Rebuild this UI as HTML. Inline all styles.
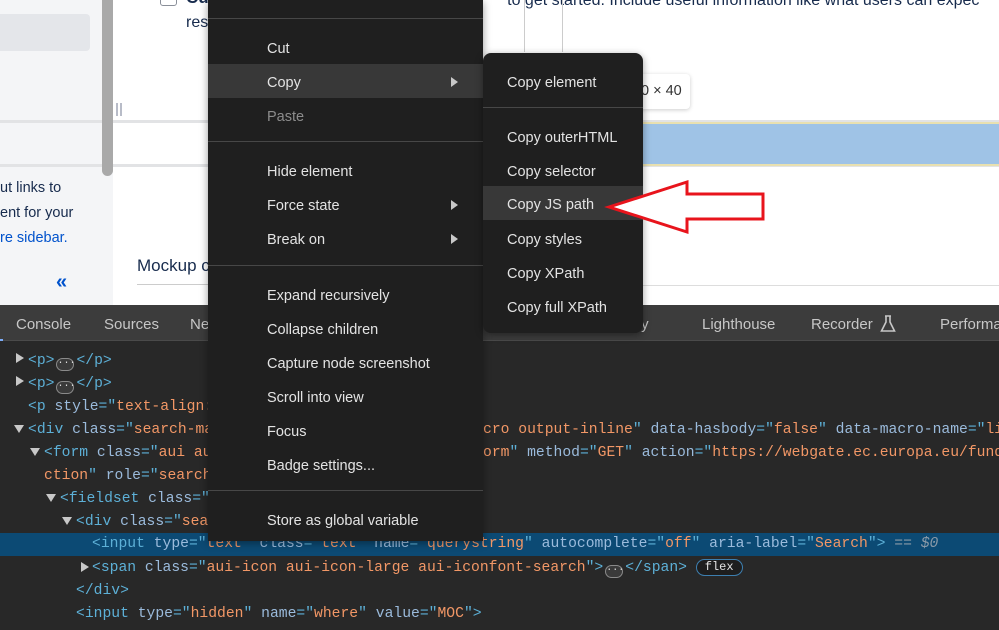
<!DOCTYPE html>
<html><head><meta charset="utf-8">
<style>
*{margin:0;padding:0;box-sizing:border-box}
body{width:999px;height:630px;overflow:hidden;position:relative;background:#fff;font-family:"Liberation Sans",sans-serif}
.a{position:absolute;white-space:nowrap}
.mono{font-family:"Liberation Mono",monospace;font-size:14.7px;line-height:23px}
.t{color:#5db0d7}.n{color:#9bbbdc}.v{color:#f29766}
.menu{position:absolute;background:#1f1f1f;color:#e3e3e3;font-size:14.5px}
.menu .i{position:absolute;left:0;right:0;height:34px;line-height:38px}
.menu .sep{position:absolute;left:0;right:0;height:1px;background:#474747}
.arr{position:absolute;right:25px;top:13px;width:0;height:0;border-left:7px solid #c8c8c8;border-top:5px solid transparent;border-bottom:5px solid transparent}
.ell{display:inline-block;width:18px;height:13px;border:1px solid #8a8a8a;border-radius:7px;background:#3a3a3a;vertical-align:-1px;color:#ddd;font-size:10px;line-height:9px;text-align:center;margin:0 2px}
.tri{position:absolute;width:0;height:0;border-left:5px solid transparent;border-right:5px solid transparent;border-top:8px solid #c8c8c8}
.trr{position:absolute;width:0;height:0;border-top:5px solid transparent;border-bottom:5px solid transparent;border-left:8px solid #c8c8c8}
</style></head><body>
<div class="a" style="left:0;top:0;width:113px;height:305px;background:#f4f5f7"></div>
<div class="a" style="left:0;top:14px;width:90px;height:37px;background:#e4e6ea;border-radius:0 4px 4px 0"></div>
<div class="a" style="left:0;top:120px;width:999px;height:3px;background:#e2e3e5"></div>
<div class="a" style="left:0;top:164px;width:999px;height:3px;background:#e2e3e5"></div>
<div class="a" style="left:483px;top:122px;width:516px;height:44px;background:#9fc3e6;border-top:2px solid #e8e0b0;border-bottom:2px solid #e8e0b0"></div>
<div class="a" style="left:102px;top:0;width:11px;height:176px;background:#a9a9a9;border-radius:0 0 6px 6px"></div>
<div class="a" style="left:116px;top:103px;width:2px;height:13px;background:#b8bcc8"></div>
<div class="a" style="left:120px;top:103px;width:2px;height:13px;background:#b8bcc8"></div>
<div class="a" style="left:0;top:176px;font-size:14.5px;color:#172b4d;line-height:25px">ut links to<br>ent for your<br><span style="color:#0052cc">re sidebar.</span></div>
<div class="a" style="left:56px;top:271px;font-size:20px;color:#0052cc;font-weight:bold">«</div>
<div class="a" style="left:160px;top:-6px;width:17px;height:12px;border:1px solid #8a8f99;border-radius:3px"></div>
<div class="a" style="left:186px;top:-12px;font-size:17px;font-weight:bold;color:#172b4d">Cu</div>
<div class="a" style="left:186px;top:14px;font-size:16px;color:#172b4d">res</div>
<div class="a" style="left:497px;top:-8px;font-size:16px;color:#172b4d">" to get started. Include useful information like what users can expec</div>
<div class="a" style="left:524px;top:0;width:1px;height:52px;background:#ccc"></div>
<div class="a" style="left:562px;top:0;width:1px;height:52px;background:#ccc"></div>
<div class="a" style="left:137px;top:256px;font-size:17px;color:#172b4d">Mockup c</div>
<div class="a" style="left:137px;top:284px;width:80px;height:1px;background:#ccc"></div>
<div class="a" style="left:620px;top:74px;width:70px;height:35px;background:#fff;border-radius:4px;box-shadow:0 1px 4px rgba(0,0,0,.2);font-size:14.5px;color:#333;line-height:35px;padding-left:21px">0 × 40</div>
<div class="a" style="left:483px;top:285px;width:516px;height:1px;background:#ddd"></div>
<div class="a" style="left:0;top:305px;width:999px;height:325px;background:#282828"></div>
<div class="a" style="left:0;top:305px;width:999px;height:36px;background:#3c3c3c;border-bottom:1px solid #4a4a4a;color:#c7c7c7;font-size:15px;line-height:40px">
<span class="a" style="left:16px">Console</span><span class="a" style="left:104px">Sources</span><span class="a" style="left:190px">Ne</span><span class="a" style="left:637px">ty</span><span class="a" style="left:702px">Lighthouse</span><span class="a" style="left:811px">Recorder</span><span class="a" style="left:940px">Performa</span>
<svg class="a" style="left:880px;top:10px" width="16" height="18" viewBox="0 0 16 18"><path d="M5 1h6M6 1v6L1.5 16h13L10 7V1" fill="none" stroke="#c7c7c7" stroke-width="1.6"/></svg>
</div>
<div class="a" style="left:0;top:339px;width:3px;height:2px;background:#7cacf8"></div>
<div class="a" style="left:0;top:533px;width:999px;height:23px;background:#0c4a74"></div>
<div class="mono">
<div class="trr" style="left:16px;top:353px"></div><div class="a" style="left:28px;top:350px"><span class="t">&lt;p&gt;</span><span class="ell">···</span><span class="t">&lt;/p&gt;</span></div>
<div class="trr" style="left:16px;top:376px"></div><div class="a" style="left:28px;top:373px"><span class="t">&lt;p&gt;</span><span class="ell">···</span><span class="t">&lt;/p&gt;</span></div>
<div class="a" style="left:28px;top:396px"><span class="t">&lt;p </span><span class="n">style</span><span class="t">="</span><span class="v">text-align:</span></div>
<div class="tri" style="left:14px;top:425px"></div><div class="a" style="left:28px;top:419px"><span class="t">&lt;div </span><span class="n">class</span><span class="t">="</span><span class="v">search-ma</span></div>
<div class="a" style="left:483px;top:419px"><span class="v">cro output-inline</span><span class="t">" </span><span class="n">data-hasbody</span><span class="t">="</span><span class="v">false</span><span class="t">" </span><span class="n">data-macro-name</span><span class="t">="</span><span class="v">li</span></div>
<div class="tri" style="left:30px;top:448px"></div><div class="a" style="left:44px;top:442px"><span class="t">&lt;form </span><span class="n">class</span><span class="t">="</span><span class="v">aui au</span></div>
<div class="a" style="left:483px;top:442px"><span class="v">orm</span><span class="t">" </span><span class="n">method</span><span class="t">="</span><span class="v">GET</span><span class="t">" </span><span class="n">action</span><span class="t">="</span><span class="v">https://webgate.ec.europa.eu/fund</span></div>
<div class="a" style="left:44px;top:465px"><span class="v">ction</span><span class="t">" </span><span class="n">role</span><span class="t">="</span><span class="v">search</span></div>
<div class="tri" style="left:46px;top:494px"></div><div class="a" style="left:60px;top:488px"><span class="t">&lt;fieldset </span><span class="n">class</span><span class="t">="</span></div>
<div class="tri" style="left:62px;top:517px"></div><div class="a" style="left:76px;top:511px"><span class="t">&lt;div </span><span class="n">class</span><span class="t">="</span><span class="v">sea</span></div>
<div class="a" style="left:92px;top:533px"><span class="t">&lt;input </span><span class="n">type</span><span class="t">="</span><span class="v">text</span><span class="t">" </span><span class="n">class</span><span class="t">="</span><span class="v">text</span><span class="t">" </span><span class="n">name</span><span class="t">="</span><span class="v">querystring</span><span class="t">" </span><span class="n">autocomplete</span><span class="t">="</span><span class="v">off</span><span class="t">" </span><span class="n">aria-label</span><span class="t">="</span><span class="v">Search</span><span class="t">"&gt;</span><span style="color:#8a9aa8;font-style:italic"> == $0</span></div>
<div class="trr" style="left:81px;top:562px"></div><div class="a" style="left:92px;top:557px"><span class="t">&lt;span </span><span class="n">class</span><span class="t">="</span><span class="v">aui-icon aui-icon-large aui-iconfont-search</span><span class="t">"&gt;</span><span class="ell">···</span><span class="t">&lt;/span&gt;</span> <span style="display:inline-block;border:1px solid #3d7fb0;border-radius:9px;color:#e3e3e3;font-size:12px;line-height:15px;padding:0 8px;background:#1e1e1e;vertical-align:1px">flex</span></div>
<div class="a" style="left:76px;top:580px"><span class="t">&lt;/div&gt;</span></div>
<div class="a" style="left:76px;top:603px"><span class="t">&lt;input </span><span class="n">type</span><span class="t">="</span><span class="v">hidden</span><span class="t">" </span><span class="n">name</span><span class="t">="</span><span class="v">where</span><span class="t">" </span><span class="n">value</span><span class="t">="</span><span class="v">MOC</span><span class="t">"&gt;</span></div>
</div>
<div class="menu" style="left:208px;top:0;width:275px;height:541px;box-shadow:0 2px 8px rgba(0,0,0,.4)">
<div class="sep" style="top:18px"></div>
<div class="i" style="top:30px;padding-left:59px">Cut</div>
<div class="i" style="top:64px;padding-left:59px;background:#383838">Copy<span class="arr"></span></div>
<div class="i" style="top:98px;padding-left:59px;color:#8c8c8c">Paste</div>
<div class="sep" style="top:141px"></div>
<div class="i" style="top:153px;padding-left:59px">Hide element</div>
<div class="i" style="top:187px;padding-left:59px">Force state<span class="arr"></span></div>
<div class="i" style="top:221px;padding-left:59px">Break on<span class="arr"></span></div>
<div class="sep" style="top:265px"></div>
<div class="i" style="top:277px;padding-left:59px">Expand recursively</div>
<div class="i" style="top:311px;padding-left:59px">Collapse children</div>
<div class="i" style="top:345px;padding-left:59px">Capture node screenshot</div>
<div class="i" style="top:379px;padding-left:59px">Scroll into view</div>
<div class="i" style="top:413px;padding-left:59px">Focus</div>
<div class="i" style="top:447px;padding-left:59px">Badge settings...</div>
<div class="sep" style="top:490px"></div>
<div class="i" style="top:502px;padding-left:59px">Store as global variable</div>
</div>
<div class="menu" style="left:483px;top:53px;width:160px;height:280px;border-radius:8px;overflow:hidden;box-shadow:0 2px 8px rgba(0,0,0,.4)">
<div class="i" style="top:11px;padding-left:24px">Copy element</div>
<div class="sep" style="top:54px"></div>
<div class="i" style="top:66px;padding-left:24px">Copy outerHTML</div>
<div class="i" style="top:100px;padding-left:24px">Copy selector</div>
<div class="i" style="top:133px;padding-left:24px;background:#383838">Copy JS path</div>
<div class="i" style="top:168px;padding-left:24px">Copy styles</div>
<div class="i" style="top:202px;padding-left:24px">Copy XPath</div>
<div class="i" style="top:236px;padding-left:24px">Copy full XPath</div>
</div>
<svg class="a" style="left:0;top:0" width="999" height="630"><path d="M609 207 L687 182 L687 194 L763 194 L763 219 L687 219 L687 232 Z" fill="#fff" stroke="#e8141c" stroke-width="3" stroke-linejoin="miter"/></svg>
</body></html>
